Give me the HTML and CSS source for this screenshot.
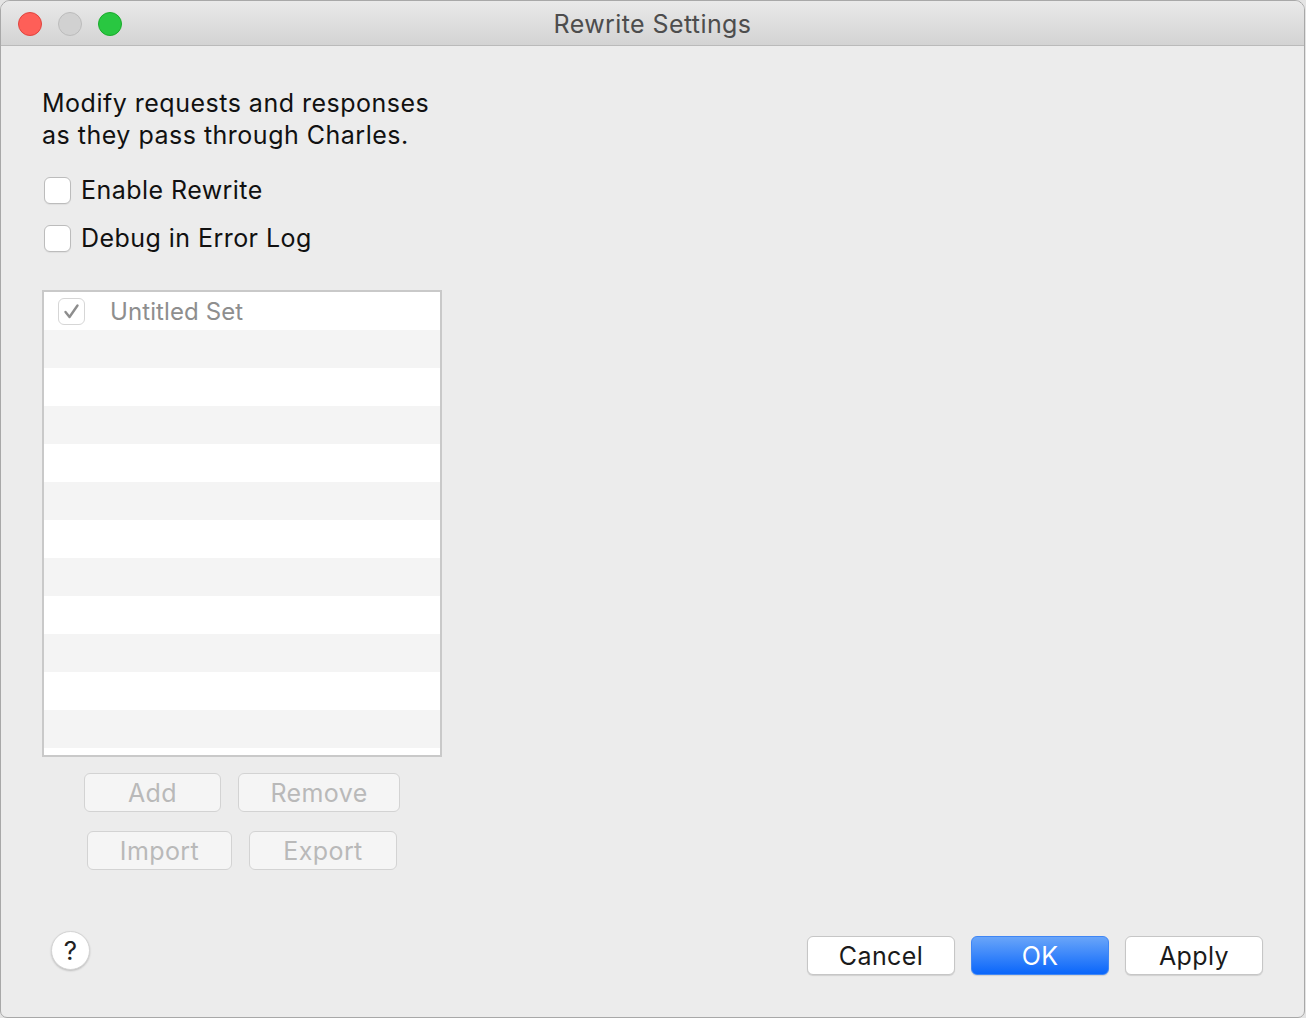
FILE: index.html
```html
<!DOCTYPE html>
<html lang="en">
<head>
<meta charset="UTF-8">
<meta name="viewport" content="width=device-width, initial-scale=1.0">
<title>Rewrite Settings</title>
<link rel="stylesheet" href="styles.css">
</head>
<body>

<div class="window">
  <div class="titlebar">
    <div class="lights">
      <span class="light red"></span>
      <span class="light gray"></span>
      <span class="light green"></span>
    </div>
    <div class="title">Rewrite Settings</div>
  </div>

  <div class="content">
    <div class="left-col">
      <p class="intro">Modify requests and responses<br>as they pass through Charles.</p>

      <label class="check-row"><span class="checkbox"></span>Enable Rewrite</label>
      <label class="check-row"><span class="checkbox"></span>Debug in Error Log</label>

      <div class="set-list">
        <div class="set-row">
          <span class="checkbox small disabled">
            <svg width="27" height="27" viewBox="0 0 27 27"><path d="M7.5 14 L11.5 19 L19.5 7.5" fill="none" stroke="#8d8d8d" stroke-width="2.4" stroke-linecap="round" stroke-linejoin="round"/></svg>
          </span>
          <span class="set-name">Untitled Set</span>
        </div>
        <div class="set-row"></div>
        <div class="set-row"></div>
        <div class="set-row"></div>
        <div class="set-row"></div>
        <div class="set-row"></div>
        <div class="set-row"></div>
        <div class="set-row"></div>
        <div class="set-row"></div>
        <div class="set-row"></div>
        <div class="set-row"></div>
        <div class="set-row"></div>
      </div>

      <div class="btn-row first">
        <button class="btn disabled w-add">Add</button>
        <button class="btn disabled w-remove">Remove</button>
      </div>
      <div class="btn-row">
        <button class="btn disabled w-import">Import</button>
        <button class="btn disabled w-export">Export</button>
      </div>
    </div>

    <div class="footer">
      <button class="help">?</button>
      <div class="actions">
        <button class="btn w-cancel">Cancel</button>
        <button class="btn primary w-ok">OK</button>
        <button class="btn w-apply">Apply</button>
      </div>
    </div>
  </div>
</div>

</body>
</html>
```

FILE: styles.css
```css
* {
  box-sizing: border-box;
}

body {
  margin: 0;
  background-color: #e4e4e4;
  font-family: "Inter", "Liberation Sans", sans-serif;
  width: 1306px;
  height: 1018px;
  overflow: hidden;
}

.window {
  width: 1305px;
  height: 1018px;
  background-color: #ececec;
  border: 1px solid #a8a8a8;
  border-radius: 10px 10px 7px 7px;
  display: flex;
  flex-direction: column;
  overflow: hidden;
}

/* title bar */
.titlebar {
  height: 45px;
  flex-shrink: 0;
  display: flex;
  align-items: center;
  justify-content: center;
  position: relative;
  background: linear-gradient(#e9e9e9, #d3d3d3);
  border-bottom: 1px solid #bababa;
}

.lights {
  position: absolute;
  left: 17px;
  top: 11px;
  display: flex;
  gap: 16px;
}

.light {
  width: 24px;
  height: 24px;
  border-radius: 50%;
  border: 1px solid transparent;
}

.light.red {
  background-color: #fe5f58;
  border-color: #e0443e;
}

.light.gray {
  background-color: #d1d1d1;
  border-color: #bcbcbc;
}

.light.green {
  background-color: #29c741;
  border-color: #1aab2b;
}

.title {
  font-size: 25px;
  letter-spacing: 0.4px;
  color: #4d4d4d;
  margin-top: 2px;
}

/* content */
.content {
  flex: 1;
  display: flex;
  flex-direction: column;
  padding: 41px 41px 42px 41px;
}

.left-col {
  width: 400px;
  display: flex;
  flex-direction: column;
}

.intro {
  margin: 0 0 25px 0;
  font-size: 25px;
  letter-spacing: 0.5px;
  line-height: 32px;
  color: #111;
  white-space: nowrap;
}

.check-row {
  display: flex;
  align-items: center;
  gap: 10px;
  height: 28px;
  margin-bottom: 20px;
  padding-left: 2px;
  font-size: 25px;
  letter-spacing: 0.45px;
  color: #111;
}

.checkbox {
  width: 27px;
  height: 27px;
  flex-shrink: 0;
  background-color: #fff;
  border: 1px solid #bcbcbc;
  border-radius: 6px;
  box-shadow: 0 1px 1px rgba(0, 0, 0, 0.06);
}

.checkbox.disabled {
  border-color: #d6d6d6;
  box-shadow: none;
}

.checkbox svg {
  display: block;
  margin: -1px;
}

/* list of sets */
.set-list {
  margin-top: 18px;
  width: 400px;
  height: 467px;
  background-color: #fff;
  border: 2px solid #c9c9c9;
  overflow: hidden;
}

.set-row {
  height: 38px;
  display: flex;
  align-items: center;
  padding-left: 14px;
}

.set-row:nth-child(even) {
  background-color: #f4f4f4;
}

.set-name {
  margin-left: 25px;
  font-size: 24px;
  letter-spacing: 0.1px;
  color: #8e8e8e;
}

/* buttons */
.btn-row {
  display: flex;
  justify-content: center;
  gap: 17px;
  margin-top: 19px;
}

.btn-row.first {
  margin-top: 16px;
}

.btn {
  height: 39px;
  padding: 0;
  font-family: inherit;
  font-size: 25px;
  letter-spacing: 0.4px;
  color: #1a1a1a;
  background-color: #fff;
  border: 1px solid #c6c6c6;
  border-radius: 6px;
  box-shadow: 0 1px 1px rgba(0, 0, 0, 0.12);
}

.btn.disabled {
  color: #b9b9b9;
  background-color: #f5f5f5;
  border-color: #d3d3d3;
  box-shadow: none;
}

.btn.primary {
  color: #fff;
  border-color: #3f86f5;
  background: linear-gradient(#69a5f9, #0a66fb);
}

.w-add { width: 137px; }
.w-remove { width: 162px; }
.w-import { width: 145px; }
.w-export { width: 148px; }
.w-cancel { width: 148px; }
.w-ok { width: 138px; }
.w-apply { width: 138px; }

/* footer */
.footer {
  margin-top: auto;
  display: flex;
  align-items: center;
  justify-content: space-between;
  padding-left: 9px;
}

.help {
  width: 39px;
  height: 39px;
  margin-top: -10px;
  padding: 0;
  border-radius: 50%;
  border: 1px solid #d4d4d4;
  background-color: #fff;
  box-shadow: 0 1px 2px rgba(0, 0, 0, 0.2);
  font-family: inherit;
  font-size: 26px;
  color: #222;
}

.actions {
  display: flex;
  gap: 16px;
}
```
